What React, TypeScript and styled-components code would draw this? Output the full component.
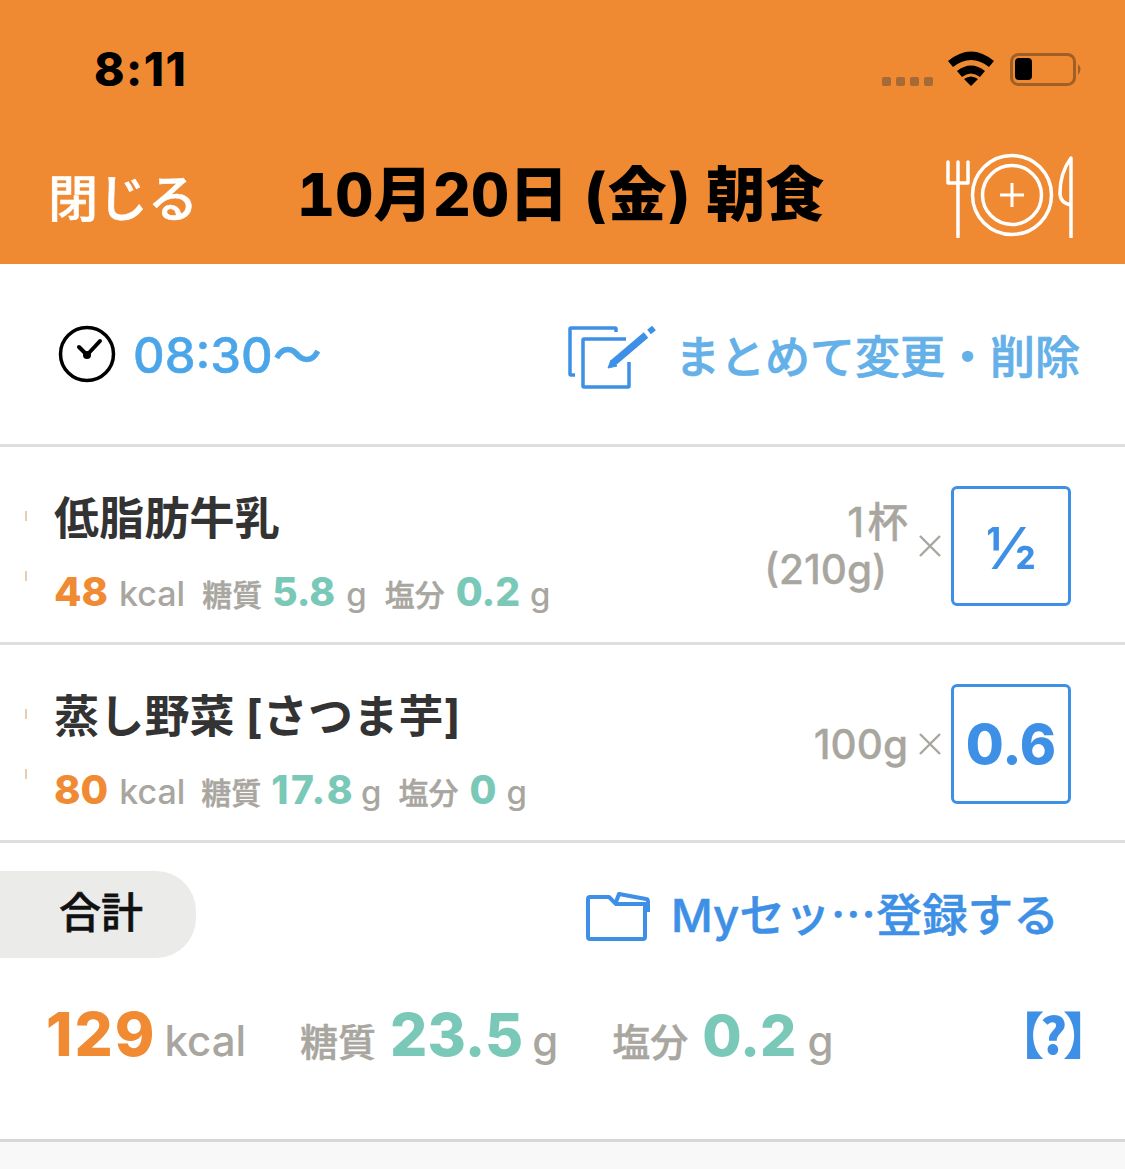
import React from "react";
import styled, { createGlobalStyle } from "styled-components";

const Global = createGlobalStyle`
  html, body { margin: 0; padding: 0; background: #fff; }
  body { font-family: Inter, "Noto Sans CJK JP", sans-serif; }
  * { box-sizing: border-box; }
`;
const Page = styled.div`width:1125px;height:1169px;overflow:hidden;display:flex;flex-direction:column;background:#f8f8f8;`;
const Header = styled.header`height:264px;background:#ef8a32;display:flex;flex-direction:column;flex:none;`;
const StatusBar = styled.div`height:138px;display:flex;align-items:center;padding:0 43px 0 94px;flex:none;`;
const Clock = styled.div`font-size:46px;font-weight:800;color:#000;line-height:1;flex:1;letter-spacing:1.5px;`;
const NavBar = styled.div`display:flex;align-items:center;height:114px;padding:0 50px 0 48px;flex:none;`;
const CloseText = styled.div`font-size:50px;color:#fff;font-weight:500;-webkit-text-stroke:.6px #fff;width:249px;white-space:nowrap;`;
const Title = styled.div`font-size:59px;font-weight:800;font-variant-numeric:tabular-nums;color:#000;white-space:nowrap;flex:1;letter-spacing:.2px;padding-bottom:10px;`;
const Section = styled.section<{ $h: number; $pt?: number }>`height:${p => p.$h}px;padding-top:${p => p.$pt ?? 0}px;flex:none;background:#fff;border-bottom:3px solid #dedede;position:relative;display:flex;align-items:center;`;
const TimeGroup = styled.div`display:flex;align-items:center;gap:16px;padding-left:58px;flex:1;`;
const TimeText = styled.div`font-size:49px;font-weight:500;-webkit-text-stroke:.5px #4ba6e9;color:#4ba6e9;white-space:nowrap;line-height:1;padding-top:2px;`;
const EditGroup = styled.div`display:flex;align-items:center;gap:19px;padding-right:45px;`;
const EditIcon = styled.svg`margin-top:6px;flex:none;`;
const EditText = styled.div`font-size:45px;font-weight:500;-webkit-text-stroke:.7px #64b0e8;color:#64b0e8;white-space:nowrap;`;
const Food = styled.div`flex:1;padding:9px 0 0 54px;display:flex;flex-direction:column;gap:8px;min-width:0;`;
const Mark = styled.i<{ $top: number }>`position:relative;display:block;&::before{content:"";position:absolute;left:-29px;top:${p => p.$top}px;width:2px;height:10px;background:#e6cdb4;}`;
const Name = styled.div`font-size:45px;line-height:54px;font-weight:700;color:#333;white-space:nowrap;letter-spacing:.2px;`;
const Macros = styled.div`display:flex;align-items:baseline;white-space:nowrap;line-height:46px;margin-top:7px;`;
const Val = styled.span<{ $c: string; $s: number; $ls?: number }>`font-size:${p => p.$s}px;font-weight:800;color:${p => p.$c};letter-spacing:${p => p.$ls ?? 0}px;`;
const Unit = styled.span<{ $s: number; $ml: number }>`font-size:${p => p.$s}px;font-weight:500;color:#a8a69f;margin-left:${p => p.$ml}px;`;
const Label = styled.span<{ $s: number; $ml: number; $mr: number }>`font-size:${p => p.$s}px;font-weight:500;-webkit-text-stroke:.5px #a8a69f;color:#a8a69f;margin-left:${p => p.$ml}px;margin-right:${p => p.$mr}px;`;
const Qty = styled.div`text-align:right;font-size:40.5px;line-height:47px;font-weight:500;color:#a8a69f;-webkit-text-stroke:.3px #a8a69f;white-space:nowrap;`;
const QtyIndent = styled.span`display:inline-block;margin-right:21px;`;
const Times = styled.div`margin:0 9px 0 10px;display:flex;`;
const Amount = styled.div`width:120px;height:120px;border:3px solid #3e90e6;border-radius:6px;margin-right:54px;display:flex;align-items:center;justify-content:center;color:#3e90e6;font-weight:800;font-size:55px;flex:none;`;
const FractionText = styled.span`font-weight:600;font-size:58px;line-height:1;padding-top:3px;`;
const Totals = styled.section`height:299px;flex:none;background:#fff;border-bottom:3px solid #d6d6d6;display:flex;flex-direction:column;padding-top:28px;`;
const TotalHead = styled.div`display:flex;align-items:center;height:87px;`;
const Pill = styled.div`width:196px;height:87px;background:#ebebea;border-radius:0 40px 40px 0;padding:0 0 10px 59px;display:flex;align-items:center;font-size:42px;font-weight:500;-webkit-text-stroke:.6px #111;color:#111;flex:none;`;
const MySet = styled.div`margin-left:auto;margin-right:66px;display:flex;align-items:center;gap:21px;color:#3e90e6;font-size:45.7px;font-weight:500;-webkit-text-stroke:.5px #3e90e6;white-space:nowrap;`;
const MySetLabel = styled.span`padding-bottom:6px;`;
const CjkDots = styled.span`font-family:"Noto Sans CJK JP",sans-serif;`;
const TotalLine = styled.div`display:flex;align-items:baseline;padding:36px 40px 0 46px;white-space:nowrap;line-height:80px;`;
const Help = styled.span`margin-left:auto;margin-right:-24px;align-self:center;padding-bottom:12px;font-size:50px;line-height:60px;font-weight:800;color:#3e90e6;font-family:"Noto Sans CJK JP",sans-serif;letter-spacing:-4px;`;
const ORANGE = "#f08b33";
const TEAL = "#7ac8b8";

const Cutlery = () => (
  <svg width="130" height="86" viewBox="0 0 130 86" fill="none" stroke="#fff" strokeWidth="3.5" style={{ flex: "none" }}>
    <path d="M3 10v21h20V10M13 10v75" strokeLinecap="round" strokeLinejoin="round" />
    <circle cx="67" cy="43" r="39.500" />
    <circle cx="67" cy="43" r="29.500" />
    <path d="M55 43h24M67 31v24" strokeWidth="3" />
    <path d="M126 85V6Q115 21 115 41Q115 51 126 53" strokeLinecap="round" strokeLinejoin="round" />
  </svg>
);
const Row = ({ name, children, right }: { name: string; children: React.ReactNode; right: React.ReactNode }) => (
  <Section $h={198} $pt={3}>
    <Food>
      <Mark $top={27} /><Name>{name}</Name>
      <Mark $top={17} /><Macros>{children}</Macros>
    </Food>
    {right}
  </Section>
);
const X = () => (
  <Times>
    <svg width="24" height="24" viewBox="0 0 24 24" stroke="#a8a69f" strokeWidth="2.4"><path d="M2 2l20 20M22 2L2 22" /></svg>
  </Times>
);

export default function App() {
  return (
    <Page>
      <Global />
      <Header>
        <StatusBar>
          <Clock>8:11</Clock>
          <svg width="200" height="40" viewBox="0 0 200 40" style={{ flex: "none" }}>
            <g fill="#a56a36">
              <rect x="0" y="28" width="9" height="9" rx="2" /><rect x="14" y="28" width="9" height="9" rx="2" />
              <rect x="28" y="28" width="9" height="9" rx="2" /><rect x="42" y="28" width="9" height="9" rx="2" />
            </g>
            <path d="M66 12Q89-7 112 12l-5 6Q89 4 71 18zM75 22q14-11 28 0l-5 6q-9-7-18 0zM82 30q7-5 14 0l-7 7z" fill="#000" />
            <rect x="129.500" y="5.500" width="63" height="30" rx="7" fill="none" stroke="#a05f27" strokeWidth="3" />
            <rect x="133" y="9" width="17" height="22" rx="4" fill="#000" />
            <path d="M196 15q5 5 0 11z" fill="#a05f27" />
          </svg>
        </StatusBar>
        <NavBar>
          <CloseText>閉じる</CloseText>
          <Title>10月20日 (金) 朝食</Title>
          <Cutlery />
        </NavBar>
      </Header>
      <Section $h={183}>
        <TimeGroup>
          <svg width="59" height="59" viewBox="0 0 59 59" fill="none" stroke="#000">
            <circle cx="29" cy="29" r="26.500" strokeWidth="3.500" />
            <path d="M21 22l8 8L42 16" strokeWidth="4" strokeLinecap="round" strokeLinejoin="round" />
            <circle cx="29" cy="30" r="4" fill="#000" stroke="none" />
          </svg>
          <TimeText>08:30〜</TimeText>
        </TimeGroup>
        <EditGroup>
          <EditIcon width="88" height="64" viewBox="0 0 88 64" fill="none" stroke="#3e90e6" strokeWidth="3.500">
            <path d="M7 50H3q-1 0-1-1V4q0-1 1-1h44q1 0 1 1v3" />
            <path d="M58 14H16q-1 0-1 1v46q0 1 1 1h44q1 0 1-1V37" />
            <path d="M45 38L78 10" strokeWidth="7" />
            <path d="M40 43l3-8 6 6z" fill="#3e90e6" strokeWidth="1" />
            <path d="M81 7l5-4" strokeWidth="6" />
          </EditIcon>
          <EditText>まとめて変更・削除</EditText>
        </EditGroup>
      </Section>
      <Row
        name="低脂肪牛乳"
        right={
          <>
            <Qty>1{"\u200a"}杯<br /><QtyIndent>(210g)</QtyIndent></Qty>
            <X />
            <Amount><FractionText>½</FractionText></Amount>
          </>
        }
      >
        <Val $c={ORANGE} $s={40}>48</Val><Unit $s={34} $ml={11}>kcal</Unit>
        <Label $s={30} $ml={17} $mr={10}>糖質</Label><Val $c={TEAL} $s={39}>5.8</Val><Unit $s={33} $ml={11}>g</Unit>
        <Label $s={30} $ml={18} $mr={11}>塩分</Label><Val $c={TEAL} $s={39}>0.2</Val><Unit $s={33} $ml={10}>g</Unit>
      </Row>
      <Row
        name="蒸し野菜 [さつま芋]"
        right={
          <>
            <Qty>100g</Qty>
            <X />
            <Amount>0.6</Amount>
          </>
        }
      >
        <Val $c={ORANGE} $s={40}>80</Val><Unit $s={34} $ml={11}>kcal</Unit>
        <Label $s={30} $ml={16} $mr={10}>糖質</Label><Val $c={TEAL} $s={39} $ls={2.5}>17.8</Val><Unit $s={33} $ml={6}>g</Unit>
        <Label $s={30} $ml={17} $mr={11}>塩分</Label><Val $c={TEAL} $s={39}>0</Val><Unit $s={33} $ml={10}>g</Unit>
      </Row>
      <Totals>
        <TotalHead>
          <Pill>合計</Pill>
          <MySet>
            <svg width="64" height="52" viewBox="0 0 64 52" fill="none" stroke="#3e90e6" strokeWidth="4" strokeLinejoin="round">
              <path d="M2 10q0-2 2-2h19l7 7h29v33q0 2-2 2H4q-2 0-2-2z" />
              <path d="M30 13l3-8 27 5q2 0 2 3v10" />
            </svg>
            <MySetLabel>Myセッ<CjkDots>…</CjkDots>登録する</MySetLabel>
          </MySet>
        </TotalHead>
        <TotalLine>
          <Val $c={ORANGE} $s={60} $ls={2}>129</Val><Unit $s={42} $ml={8}>kcal</Unit>
          <Label $s={38} $ml={54} $mr={14}>糖質</Label><Val $c={TEAL} $s={58.5}>23.5</Val><Unit $s={42} $ml={9}>g</Unit>
          <Label $s={38} $ml={54} $mr={14}>塩分</Label><Val $c={TEAL} $s={57}>0.2</Val><Unit $s={42} $ml={11}>g</Unit>
          <Help>【?】</Help>
        </TotalLine>
      </Totals>
    </Page>
  );
}
